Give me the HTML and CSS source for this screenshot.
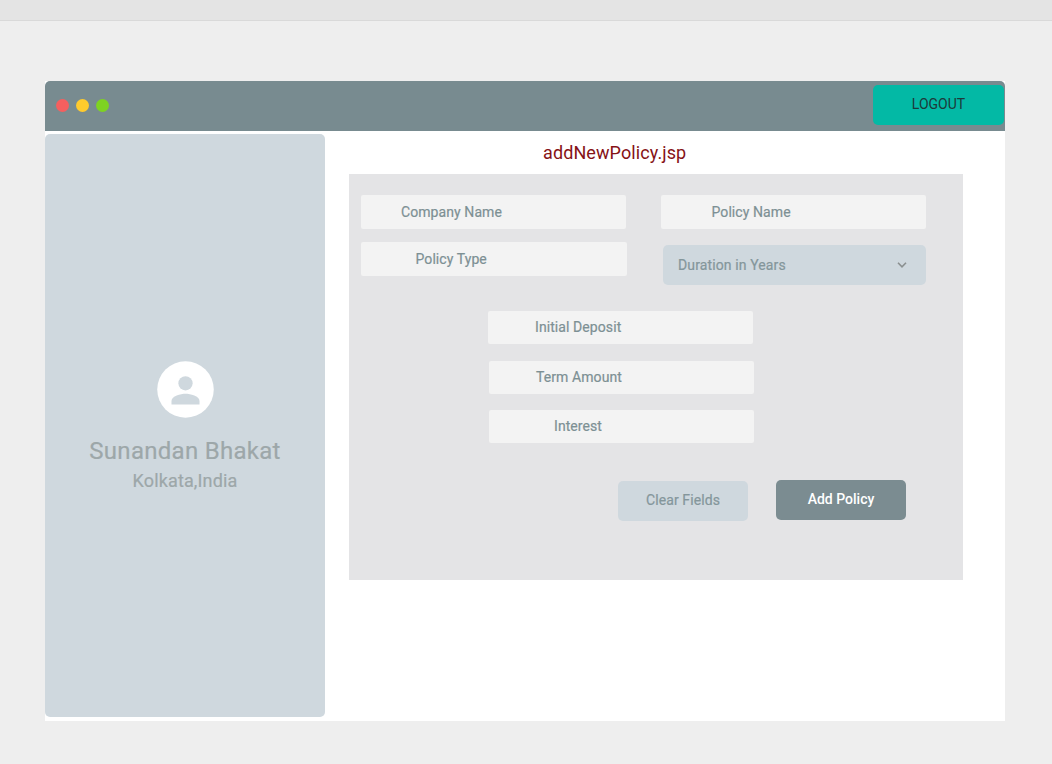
FILE: index.html
```html
<!DOCTYPE html>
<html lang="en">
<head>
<meta charset="utf-8">
<title>addNewPolicy.jsp</title>
<link rel="stylesheet" href="styles.css">
</head>
<body>
<div class="strip"></div>
<div class="window">
  <header class="titlebar">
    <div class="dots"><span class="dot red"></span><span class="dot yellow"></span><span class="dot green"></span></div>
    <button class="btn logout"><span>LOGOUT</span></button>
  </header>
  <div class="body">
    <aside class="profile">
      <svg class="avatar" viewBox="0 0 24 24" width="57" height="57">
        <circle cx="12" cy="12" r="11.9" fill="#fff"/>
        <circle cx="12" cy="9.4" r="3" fill="#cfd8de"/>
        <path d="M6.1 18.3v-1.5c0-2 3.9-3 5.9-3s5.9 1 5.9 3v1.5z" fill="#cfd8de"/>
      </svg>
      <h2 class="name"><span>Sunandan Bhakat</span></h2>
      <p class="place"><span>Kolkata,India</span></p>
    </aside>
    <main class="main">
      <h1 class="title"><span>addNewPolicy.jsp</span></h1>
      <form class="panel">
        <div class="columns">
          <div class="column">
            <div class="field company"><span>Company Name</span></div>
            <div class="field type"><span>Policy Type</span></div>
          </div>
          <div class="column second">
            <div class="field policy"><span>Policy Name</span></div>
            <div class="select"><span>Duration in Years</span>
              <svg class="chevron" width="10" height="6" viewBox="0 0 10 6"><path d="M1 .8l4 4 4-4" fill="none" stroke="#8b9090" stroke-width="1.6"/></svg>
            </div>
          </div>
        </div>
        <div class="amounts">
          <div class="field deposit"><span>Initial Deposit</span></div>
          <div class="field term"><span>Term Amount</span></div>
          <div class="field interest"><span>Interest</span></div>
        </div>
        <div class="actions">
          <button type="button" class="btn clear"><span>Clear Fields</span></button>
          <button type="button" class="btn add"><span>Add Policy</span></button>
        </div>
      </form>
    </main>
  </div>
</div>
</body>
</html>
```
FILE: styles.css
```css
* { box-sizing: border-box; }
body { margin: 0; height: 764px; overflow: hidden; background: #eee; font-family: Roboto, sans-serif; }
.strip { height: 21px; background: #e4e4e4; border-bottom: 1px solid #d9d9d9; }
.window { width: 960px; height: 640px; margin: 60px 0 0 45px; background: #fff; }
.titlebar { height: 50px; background: #788b90; border-radius: 5px 5px 0 0; display: flex; justify-content: space-between; padding: 4px 1px 0 11px; }
.dots { display: flex; gap: 7px; padding-top: 14px; }
.dot { width: 13px; height: 13px; border-radius: 50%; }
.red { background: #f55f5f; }
.yellow { background: #ffcb2d; }
.green { background: #7ed321; }
.btn { width: 130px; height: 40px; border: 0; border-radius: 5px; padding: 0 0 2px; font: 500 14px/20px Roboto, sans-serif; text-align: center; }
.logout { width: 131px; background: #03b9a5; color: #1d3a3a; font-weight: 400; }
.body { display: flex; padding-top: 3px; }
.profile { width: 280px; height: 583px; background: #cfd8de; border-radius: 5px; display: flex; flex-direction: column; align-items: center; padding-top: 227px; }
.avatar { display: block; }
.name { margin: 18px 0 0; font-size: 24px; line-height: 30px; font-weight: 400; letter-spacing: .28px; color: #9da7a9; -webkit-text-stroke: .2px #9da7a9; }
.place { margin: 3px 0 0; font-size: 18px; line-height: 24px; font-weight: 400; letter-spacing: .15px; color: #9da7a9; -webkit-text-stroke: .2px #9da7a9; }
.main { width: 614px; margin-left: 24px; }
.title { margin: 0; height: 40px; padding: 7px 0 0 194px; font-size: 18px; line-height: 24px; font-weight: 400; letter-spacing: .1px; color: #861216; }
.panel { height: 406px; background: #e4e4e6; padding: 21px 37px 0 12px; }
.columns { display: flex; justify-content: space-between; }
.column { width: 266px; display: flex; flex-direction: column; gap: 14px; }
.second { width: 265px; gap: 17px; }
.field { width: 265px; height: 33px; background: #f3f3f3; border-radius: 2px; font-size: 14px; line-height: 33px; font-weight: 400; letter-spacing: .08px; color: #7d9094; -webkit-text-stroke: .2px #7d9094; white-space: nowrap; }
.columns .field { height: 33.5px; line-height: 35px; }
.columns .column .field { margin-bottom: -.5px; }
.company { padding-left: 40px; }
.type { width: 266px; padding-left: 54.5px; }
.policy { padding-left: 50.5px; }
.select { width: 263px; height: 40px; margin-left: 2px; padding: 0 19px 0 15px; background: #cfd8de; border-radius: 5px; display: flex; align-items: center; justify-content: space-between; font-size: 14px; font-weight: 400; letter-spacing: .12px; color: #84969b; -webkit-text-stroke: .2px #84969b; }
.amounts { width: 266px; margin: 26px 0 0 127px; }
.deposit { padding-left: 47px; }
.term { margin: 17px 0 0 1px; padding-left: 47px; }
.interest { margin: 16px 0 0 1px; padding-left: 65px; }
.actions { display: flex; justify-content: flex-end; gap: 28px; margin: 37px 20px 0 0; }
.clear { margin-top: 1px; background: #cfd8de; color: #84969b; font-weight: 400; letter-spacing: .1px; -webkit-text-stroke: .2px #84969b; }
.add { background: #7b8c91; color: #fff; }
```
